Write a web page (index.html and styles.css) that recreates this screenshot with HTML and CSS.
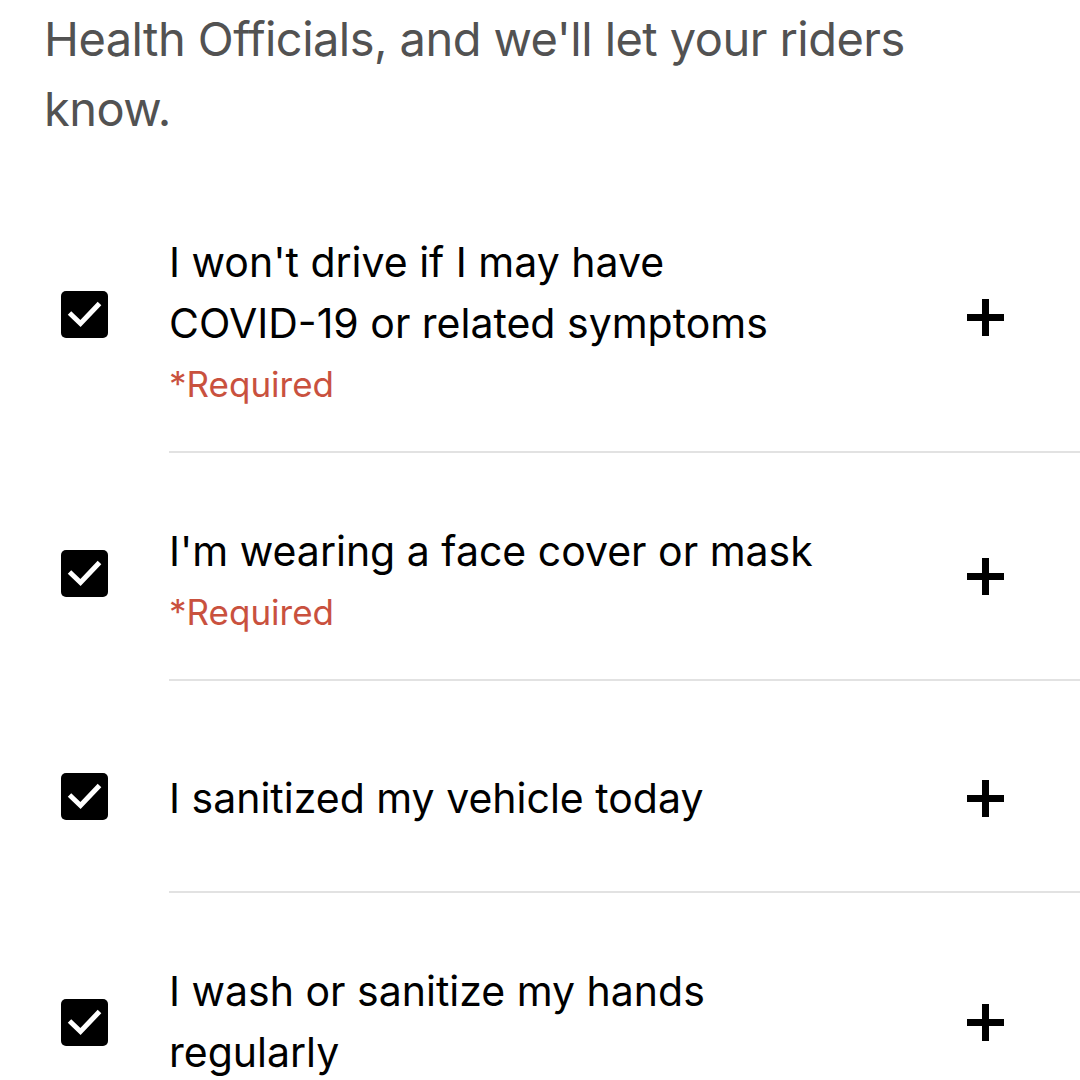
FILE: index.html
```html
<!DOCTYPE html>
<html lang="en">
<head>
<meta charset="utf-8">
<link rel="stylesheet" href="styles.css">
</head>
<body>
<p class="intro">Health Officials, and we'll let your riders know.</p>
<ul class="list">
  <li class="item has-req">
    <div class="check"><svg class="box" viewBox="0 0 47 47"><rect width="47" height="47" rx="5" fill="#000"/><path d="M8.5 22 L19.5 32.5 L38.5 12.5" fill="none" stroke="#fff" stroke-width="5"/></svg></div>
    <div class="body">
      <div class="text">
        <div class="label">I won't drive if I may have <span class="nowrap">COVID-19</span> or related symptoms</div>
        <div class="req">*Required</div>
      </div>
      <svg class="plus" viewBox="0 0 37 37"><path d="M18.5 0 V37 M0 18.5 H37" stroke="#000" stroke-width="7"/></svg>
    </div>
  </li>
  <li class="item has-req">
    <div class="check"><svg class="box" viewBox="0 0 47 47"><rect width="47" height="47" rx="5" fill="#000"/><path d="M8.5 22 L19.5 32.5 L38.5 12.5" fill="none" stroke="#fff" stroke-width="5"/></svg></div>
    <div class="body">
      <div class="text">
        <div class="label">I'm wearing a face cover or mask</div>
        <div class="req">*Required</div>
      </div>
      <svg class="plus" viewBox="0 0 37 37"><path d="M18.5 0 V37 M0 18.5 H37" stroke="#000" stroke-width="7"/></svg>
    </div>
  </li>
  <li class="item single">
    <div class="check"><svg class="box" viewBox="0 0 47 47"><rect width="47" height="47" rx="5" fill="#000"/><path d="M8.5 22 L19.5 32.5 L38.5 12.5" fill="none" stroke="#fff" stroke-width="5"/></svg></div>
    <div class="body">
      <div class="text">
        <div class="label">I sanitized my vehicle today</div>
      </div>
      <svg class="plus" viewBox="0 0 37 37"><path d="M18.5 0 V37 M0 18.5 H37" stroke="#000" stroke-width="7"/></svg>
    </div>
  </li>
  <li class="item">
    <div class="check"><svg class="box" viewBox="0 0 47 47"><rect width="47" height="47" rx="5" fill="#000"/><path d="M8.5 22 L19.5 32.5 L38.5 12.5" fill="none" stroke="#fff" stroke-width="5"/></svg></div>
    <div class="body">
      <div class="text">
        <div class="label">I wash or sanitize my hands regularly</div>
      </div>
      <svg class="plus" viewBox="0 0 37 37"><path d="M18.5 0 V37 M0 18.5 H37" stroke="#000" stroke-width="7"/></svg>
    </div>
  </li>
</ul>
</body>
</html>
```
FILE: styles.css
```css
html, body {
  margin: 0;
  padding: 0;
  background: #fff;
}
body {
  width: 1080px;
  height: 1080px;
  overflow: hidden;
  font-family: Inter, "Noto Sans", "Liberation Sans", sans-serif;
  color: #000;
}
.intro {
  margin: 0;
  padding: 4px 150px 0 44px;
  font-size: 47px;
  letter-spacing: -0.55px;
  line-height: 70px;
  color: #525252;
  height: 164px;
  box-sizing: border-box;
}
.list {
  list-style: none;
  margin: 0;
  padding: 0;
}
.item {
  display: flex;
  align-items: stretch;
}
.check {
  width: 169px;
  box-sizing: border-box;
  padding: 68px 0 38px 61px;
  display: flex;
  align-items: center;
  flex-shrink: 0;
}
.box {
  width: 47px;
  height: 47px;
  display: block;
}
.body {
  flex: 1;
  display: flex;
  align-items: center;
  padding: 68px 76px 36px 0;
  border-bottom: 2px solid #e2e2e2;
}
.item.has-req .check {
  padding-top: 62px;
  padding-bottom: 50px;
}
.item.has-req .plus {
  margin-bottom: 12px;
}
.item.single .check {
  padding-top: 85px;
  padding-bottom: 66px;
}
.item.single .body {
  padding-top: 87px;
  padding-bottom: 62px;
}
.text {
  flex: 1;
  margin-right: 120px;
}
.label {
  font-size: 41px;
  line-height: 61px;
}
.nowrap {
  white-space: nowrap;
}
.req {
  font-size: 35px;
  line-height: 61px;
  color: #c9513e;
}
.plus {
  width: 37px;
  height: 37px;
  display: block;
  flex-shrink: 0;
}
```
